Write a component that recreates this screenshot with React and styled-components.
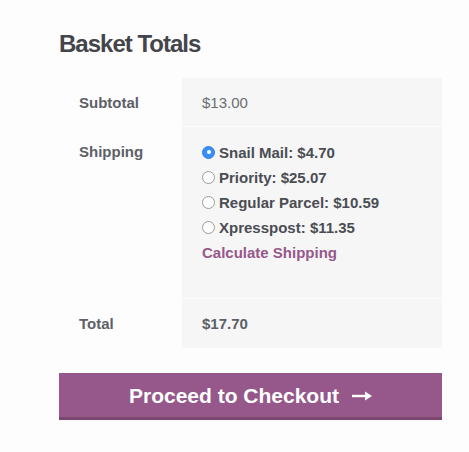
import styled, { createGlobalStyle } from 'styled-components';

const GlobalStyle = createGlobalStyle`
	html, body {
		margin: 0;
		padding: 0;
		background: #fdfdfd;
	}
	body {
		font-family: 'Liberation Sans', Arial, sans-serif;
		color: #43454b;
	}
`;

const Wrapper = styled.div`
	width: 383px;
	padding: 30px 0 30px 59px;
`;

const Title = styled.h2`
	margin: 0 0 19px;
	font-size: 24px;
	line-height: 28.8px;
	font-weight: 700;
	letter-spacing: -1px;
	color: #43454b;
`;

const Totals = styled.div`
	display: grid;
	grid-template-columns: 123px 1fr;
	row-gap: 1px;
`;

const Label = styled.div`
	padding: 13px 20px ${(p) => (p.$last ? '13px' : '12px')};
	font-size: 15px;
	line-height: 23px;
	font-weight: 700;
	color: #5d6066;
`;

const Value = styled.div`
	background: #f6f6f6;
	padding: 13px 20px ${(p) => (p.$last ? '13px' : '12px')};
	font-size: 15px;
	line-height: 23px;
	font-weight: ${(p) => (p.$strong ? 700 : 400)};
	color: ${(p) => (p.$strong ? '#5d6066' : '#6b6d72')};
`;

const Methods = styled.ul`
	list-style: none;
	margin: 0;
	padding: 0;
`;

const Method = styled.li`
	display: flex;
	align-items: center;
	gap: 4px;
	line-height: 25px;
	font-weight: 700;
	color: #4a4d53;
`;

const Radio = styled.span`
	box-sizing: border-box;
	width: 13px;
	height: 13px;
	border-radius: 50%;
	flex: none;
	display: flex;
	align-items: center;
	justify-content: center;
	background: ${(p) => (p.$checked ? '#3a8ef6' : '#fff')};
	border: 1px solid ${(p) => (p.$checked ? '#2f7fe6' : '#9b9b9b')};

	&::after {
		content: '';
		width: 4px;
		height: 4px;
		border-radius: 50%;
		background: #fff;
		display: ${(p) => (p.$checked ? 'block' : 'none')};
	}
`;

const CalcLink = styled.a`
	display: block;
	margin-bottom: 21px;
	line-height: 25px;
	font-weight: 700;
	color: #96588a;
	text-decoration: none;
`;

const CheckoutButton = styled.a`
	margin-top: 25px;
	display: flex;
	align-items: center;
	justify-content: center;
	gap: 13px;
	background: #96588a;
	border-bottom: 3px solid #7c4671;
	padding: 11px 0 9px;
	font-size: 21px;
	line-height: 24px;
	font-weight: 700;
	color: #fff;
	text-decoration: none;
`;

const methods = [
	{ name: 'Snail Mail', price: '$4.70', checked: true },
	{ name: 'Priority', price: '$25.07' },
	{ name: 'Regular Parcel', price: '$10.59' },
	{ name: 'Xpresspost', price: '$11.35' },
];

const Arrow = () => (
	<svg width='20' height='12' viewBox='0 0 20 12'>
		<line x1='0' y1='6' x2='16' y2='6' stroke='#fff' strokeWidth='2.4' />
		<polygon points='13,1.5 20,6 13,10.5' fill='#fff' />
	</svg>
);

const App = () => {
	return (
		<Wrapper>
			<GlobalStyle />
			<Title>Basket Totals</Title>
			<Totals>
				<Label>Subtotal</Label>
				<Value>$13.00</Value>

				<Label>Shipping</Label>
				<Value>
					<Methods>
						{methods.map((m) => (
							<Method key={m.name}>
								<Radio $checked={m.checked} />
								{m.name}: {m.price}
							</Method>
						))}
					</Methods>
					<CalcLink href='#'>Calculate Shipping</CalcLink>
				</Value>

				<Label $last>Total</Label>
				<Value $last $strong>
					$17.70
				</Value>
			</Totals>
			<CheckoutButton href='#'>
				Proceed to Checkout
				<Arrow />
			</CheckoutButton>
		</Wrapper>
	);
};

export default App;
